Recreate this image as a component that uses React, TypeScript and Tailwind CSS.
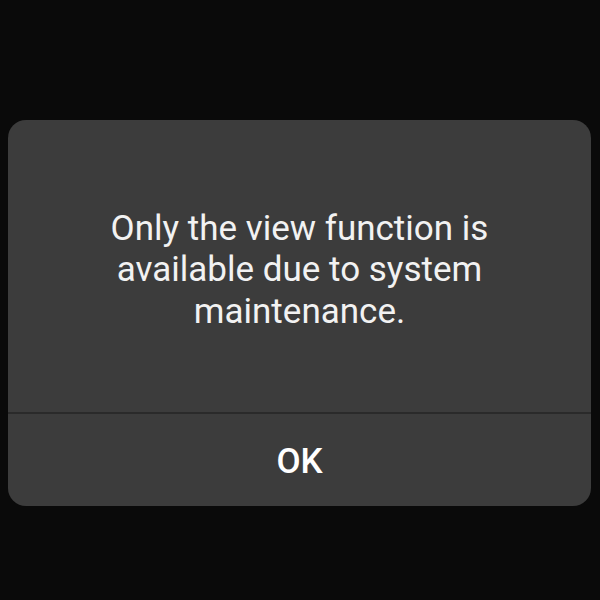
const App = () => {
  return (
    <div className="flex h-[600px] w-[600px] items-start bg-[#0a0a0a] pl-[8px] pt-[120px] font-['Roboto',sans-serif]">
      <div className="flex h-[386px] w-[583px] flex-col overflow-hidden rounded-[18px] bg-[#3c3c3c]">
        <div className="flex h-[292px] items-center justify-center px-6 pt-[8px]">
          <p className="text-center text-[35px] leading-[41.5px] text-[#f2f2f2]">
            Only the view function is
            <br />
            available due to system
            <br />
            maintenance.
          </p>
        </div>
        <div className="h-[2px] bg-[#2a2a2a]" />
        <button className="flex flex-1 items-center justify-center pt-[5px] text-[35px] font-medium text-white">
          OK
        </button>
      </div>
    </div>
  );
};

export default App;
